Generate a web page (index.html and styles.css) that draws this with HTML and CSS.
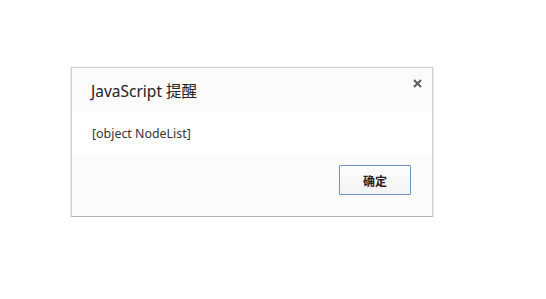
FILE: index.html
```html
<!DOCTYPE html>
<html lang="zh">
<head>
<meta charset="utf-8">
<link rel="stylesheet" href="styles.css">
</head>
<body>
<div class="dialog">
  <div class="header">
    <span class="title">JavaScript 提醒</span>
    <span class="close">
      <svg width="9" height="9" viewBox="0 0 9 9"><path d="M1 1L8 8M8 1L1 8" stroke="#5a5a5a" stroke-width="2"/></svg>
    </span>
  </div>
  <div class="message">[object NodeList]</div>
  <div class="footer">
    <button class="ok">确定</button>
  </div>
</div>
</body>
</html>
```
FILE: styles.css
```css
html, body {
  margin: 0;
  padding: 0;
  background: #fff;
}
body {
  padding: 67px 0 0 71px;
  font-family: "Noto Sans", "Noto Sans CJK SC", sans-serif;
  color: #222;
}
.dialog {
  position: relative;
  width: 360px;
  border: 1px solid #cfcfcf;
  border-bottom-color: #b4b4b4;
  box-shadow: 0 1px 2px rgba(0,0,0,0.2);
}
.header {
  height: 44px;
  background: #fbfbfb;
  display: flex;
  align-items: center;
  padding-left: 19px;
}
.title {
  font-size: 15.5px;
  color: #222;
  padding-top: 1px;
}
.close {
  position: absolute;
  top: 11px;
  right: 10px;
  width: 9px;
  height: 9px;
  display: block;
}
.close svg { display: block; }
.message {
  height: 43px;
  background: #fff;
  display: flex;
  align-items: center;
  padding-left: 20px;
  font-size: 12.4px;
  color: #333;
}
.footer {
  height: 61px;
  background: #fbfbfb;
  display: flex;
  justify-content: flex-end;
  align-items: flex-start;
  padding-right: 21px;
  box-sizing: border-box;
  padding-top: 10px;
}
.ok {
  width: 72px;
  height: 30px;
  border: 1px solid #6f8fc7;
  border-radius: 1px;
  background: linear-gradient(#fdfdfd, #f3f3f3);
  font-family: "Noto Sans CJK SC", sans-serif;
  font-size: 12px;
  font-weight: bold;
  color: #222;
  padding: 0;
}
```
